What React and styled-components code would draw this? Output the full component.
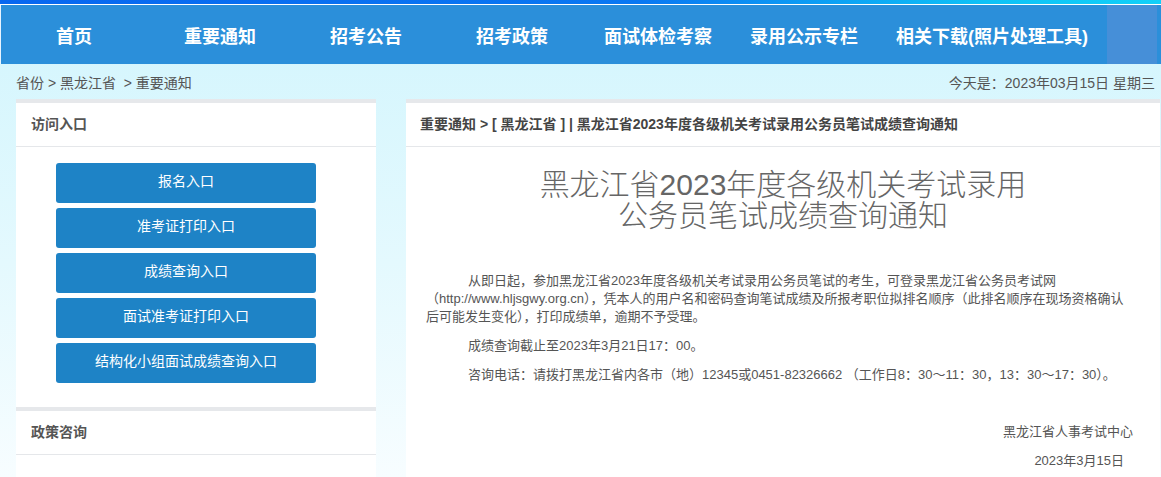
import React from 'react'
import styled, { createGlobalStyle } from 'styled-components'

const Global = createGlobalStyle`
    html, body {
        margin: 0;
        padding: 0;
    }
    body {
        width: 1161px;
        height: 477px;
        overflow: hidden;
        font-family: "Liberation Sans", "Noto Sans CJK SC", sans-serif;
        background: linear-gradient(to bottom, #d2f5fd 0%, #e4f9fe 55%, #f7fdff 100%);
        color: #555;
    }
`;

const TopStrip = styled.div`
    height: 4px;
    background: linear-gradient(to right, #0867f0 0%, #0a78f2 55%, #0fc2f6 85%, #12d0f8 100%);
    border-bottom: 1px solid #ffffff;
`;

const Nav = styled.nav`
    height: 59px;
    display: flex;
    background-color: #2b8fda;
    border-left: 1px solid #e8f4ff;
`;

const NavItem = styled.a`
    width: ${p => p.$w || 146}px;
    display: flex;
    align-items: center;
    justify-content: center;
    color: #ffffff;
    font-size: 18px;
    font-weight: bold;
    text-decoration: none;
    white-space: nowrap;
`;

const NavTail = styled.div`
    width: 50px;
    background-color: #468fd8;
`;

const Crumbs = styled.div`
    height: 35px;
    display: flex;
    align-items: center;
    justify-content: space-between;
    padding: 0 6px 0 16px;
    font-size: 14px;
    color: #555;
    & > span {
        white-space: pre;
    }
`;

const Main = styled.div`
    display: flex;
    gap: 30px;
    padding: 0 1px 0 16px;
    align-items: flex-start;
`;

const Side = styled.aside`
    width: 360px;
    display: flex;
    flex-direction: column;
`;

const Panel = styled.section`
    background-color: #ffffff;
    border-top: 4px solid #e6e8eb;
    padding-bottom: ${p => p.$pb || 0}px;
    min-height: ${p => p.$min || 0}px;
`;

const PanelHead = styled.div`
    height: 44px;
    box-sizing: border-box;
    padding-bottom: 3px;
    display: flex;
    align-items: center;
    padding-left: ${p => p.$pl || 15}px;
    border-bottom: 1px solid #e5e7ea;
    font-size: ${p => p.$fs || 14}px;
    font-weight: bold;
    color: ${p => p.$c || '#555'};
    white-space: nowrap;
`;

const EntryList = styled.div`
    display: flex;
    flex-direction: column;
    gap: 5px;
    padding: 16px 0 0 40px;
`;

const EntryButton = styled.a`
    width: 260px;
    height: 40px;
    border-radius: 3px;
    background-color: #1e83c6;
    color: #ffffff;
    font-size: 14px;
    display: flex;
    align-items: center;
    justify-content: center;
    text-decoration: none;
    padding-bottom: 6px;
    box-sizing: border-box;
`;

const Article = styled.article`
    flex: 1;
    background-color: #ffffff;
    border-top: 4px solid #e6e8eb;
    min-height: 400px;
`;

const Title = styled.h1`
    margin: 22px 0 0;
    text-align: center;
    font-size: 30px;
    line-height: 31px;
    font-weight: 300;
    color: #666;
`;

const Body = styled.div`
    padding: 41px 27px 0 20px;
    font-size: 13px;
    line-height: 18px;
    color: #555;
`;

const Para = styled.p`
    margin: 0 0 11px;
    text-indent: 42px;
`;

const Sign = styled.p`
    margin: ${p => p.$mt || 0}px 0 0;
    text-align: right;
    padding-right: ${p => p.$pr || 0}px;
    line-height: 18px;
`;

const navLinks = [
    ['首页', 146],
    ['重要通知', 146],
    ['招考公告', 146],
    ['招考政策', 146],
    ['面试体检考察', 146],
    ['录用公示专栏', 146],
    ['相关下载(照片处理工具)', 230],
];

const entries = ['报名入口', '准考证打印入口', '成绩查询入口', '面试准考证打印入口', '结构化小组面试成绩查询入口'];

export default function App() {
    return (
        <>
            <Global />
            <TopStrip />
            <Nav>
                {navLinks.map(([t, w]) => (
                    <NavItem key={t} $w={w}>{t}</NavItem>
                ))}
                <NavTail />
            </Nav>
            <Crumbs>
                <span>省份 &gt; 黑龙江省  &gt; 重要通知</span>
                <span>今天是：2023年03月15日 星期三</span>
            </Crumbs>
            <Main>
                <Side>
                    <Panel $pb={24}>
                        <PanelHead>访问入口</PanelHead>
                        <EntryList>
                            {entries.map(e => <EntryButton key={e}>{e}</EntryButton>)}
                        </EntryList>
                    </Panel>
                    <Panel $min={70}>
                        <PanelHead>政策咨询</PanelHead>
                    </Panel>
                </Side>
                <Article>
                    <PanelHead $pl={14} $c="#444">重要通知 &gt; [ 黑龙江省 ] | 黑龙江省2023年度各级机关考试录用公务员笔试成绩查询通知</PanelHead>
                    <Title>黑龙江省2023年度各级机关考试录用<br />公务员笔试成绩查询通知</Title>
                    <Body>
                        <Para>从即日起，参加黑龙江省2023年度各级机关考试录用公务员笔试的考生，可登录黑龙江省公务员考试网（http://www.hljsgwy.org.cn），凭本人的用户名和密码查询笔试成绩及所报考职位拟排名顺序（此排名顺序在现场资格确认后可能发生变化），打印成绩单，逾期不予受理。</Para>
                        <Para>成绩查询截止至2023年3月21日17：00。</Para>
                        <Para>咨询电话：请拨打黑龙江省内各市（地）12345或0451-82326662 （工作日8：30～11：30，13：30～17：30）。</Para>
                        <Sign $mt={39}>黑龙江省人事考试中心</Sign>
                        <Sign $mt={11} $pr={9}>2023年3月15日</Sign>
                    </Body>
                </Article>
            </Main>
        </>
    )
}
